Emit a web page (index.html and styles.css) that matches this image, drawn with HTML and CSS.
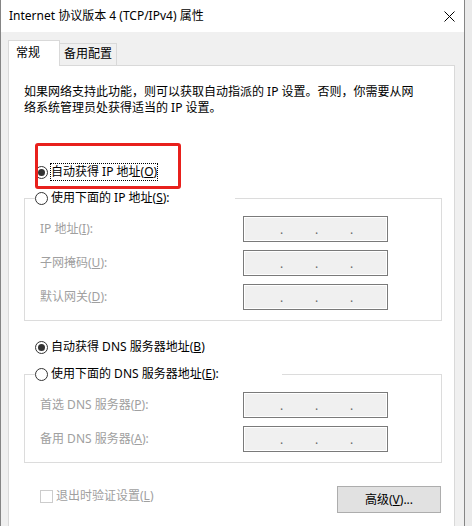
FILE: index.html
```html
<!DOCTYPE html>
<html lang="zh-CN">
<head>
<meta charset="utf-8">
<title>Internet 协议版本 4 (TCP/IPv4) 属性</title>
<link rel="stylesheet" href="styles.css">
</head>
<body>
<div class="window">
  <div class="titlebar">
    <span class="title">Internet 协议版本 4 (TCP/IPv4) 属性</span>
    <svg class="close" width="11" height="11" viewBox="0 0 11 11" aria-label="关闭"><path d="M0.5 0.5 L10.5 10.5 M10.5 0.5 L0.5 10.5" stroke="#000" stroke-width="1" fill="none"/></svg>
  </div>
  <div class="body">
    <div class="tabs">
      <div class="tab active">常规</div>
      <div class="tab">备用配置</div>
    </div>
    <div class="panel">
      <p class="desc">如果网络支持此功能，则可以获取自动指派的 IP 设置。否则，你需要从网<br>络系统管理员处获得适当的 IP 设置。</p>

      <label class="radio-row top-row"><span class="radio checked"></span><span class="rtext focus">自动获得 IP 地址(<u>O</u>)</span></label>

      <fieldset class="group group-ip">
        <legend class="legend-ip"><label class="radio-row"><span class="radio"></span><span class="rtext">使用下面的 IP 地址(<u>S</u>):</span></label></legend>
        <div class="field"><span class="flabel">IP 地址(<u>I</u>):</span><span class="ipbox"><span>.</span><span>.</span><span>.</span></span></div>
        <div class="field"><span class="flabel">子网掩码(<u>U</u>):</span><span class="ipbox"><span>.</span><span>.</span><span>.</span></span></div>
        <div class="field"><span class="flabel">默认网关(<u>D</u>):</span><span class="ipbox"><span>.</span><span>.</span><span>.</span></span></div>
      </fieldset>

      <label class="radio-row dns-row"><span class="radio checked"></span><span class="rtext">自动获得 DNS 服务器地址(<u>B</u>)</span></label>

      <fieldset class="group group-dns">
        <legend class="legend-dns"><label class="radio-row"><span class="radio"></span><span class="rtext">使用下面的 DNS 服务器地址(<u>E</u>):</span></label></legend>
        <div class="field"><span class="flabel">首选 DNS 服务器(<u>P</u>):</span><span class="ipbox"><span>.</span><span>.</span><span>.</span></span></div>
        <div class="field"><span class="flabel">备用 DNS 服务器(<u>A</u>):</span><span class="ipbox"><span>.</span><span>.</span><span>.</span></span></div>
      </fieldset>

      <div class="footer">
        <label class="check-row"><span class="checkbox"></span><span class="ctext">退出时验证设置(<u>L</u>)</span></label>
        <button class="btn">高级(<u>V</u>)...</button>
      </div>
    </div>
  </div>
  <div class="annot"></div>
</div>
</body>
</html>
```

FILE: styles.css
```css
* { box-sizing: border-box; }

html, body {
  margin: 0;
  padding: 0;
}

body {
  background: #eaeaea;
  font-family: "Noto Sans", "Noto Sans CJK SC", sans-serif;
  font-size: 12px;
  line-height: 16px;
  color: #000;
  width: 472px;
  height: 526px;
  overflow: hidden;
}

.window {
  position: relative;
  width: 465px;
  height: 526px;
  border-left: 1px solid #858585;
  border-right: 1px solid #858585;
  background: #f0f0f0;
}

.titlebar {
  height: 32px;
  background: #fff;
  display: flex;
  align-items: center;
  justify-content: space-between;
  padding: 0 9px 0 8px;
}

.title {
  font-size: 12px;
  line-height: 16px;
}

.close {
  display: block;
}

.body {
  padding: 8px 9px 0 7px;
}

.tabs {
  display: flex;
  align-items: flex-end;
  height: 25px;
}

.tab {
  border: 1px solid #d9d9d9;
  border-bottom: none;
  background: #f0f0f0;
  height: 22px;
  width: 58px;
  margin-left: -1px;
  text-align: center;
  padding-top: 2px;
}

.tab.active {
  position: relative;
  z-index: 1;
  background: #fff;
  height: 26px;
  width: 52px;
  margin-left: 0;
  margin-bottom: -1px;
  text-align: left;
  padding: 4px 0 0 7px;
}

.panel {
  background: #fff;
  border: 1px solid #d9d9d9;
  height: 470px;
  padding-top: 18px;
}

.desc {
  margin: 0 0 0 15px;
  line-height: 16px;
}

.radio-row {
  display: flex;
  align-items: center;
  height: 18px;
}

.top-row {
  margin: 47px 0 0 26px;
}

.dns-row {
  margin: 17px 0 0 26px;
}

.radio {
  width: 13px;
  height: 13px;
  border: 1px solid #333;
  border-radius: 50%;
  background: #fff;
  margin-right: 2px;
  display: flex;
  align-items: center;
  justify-content: center;
  flex: none;
}

.radio.checked::after {
  content: "";
  width: 7px;
  height: 7px;
  border-radius: 50%;
  background: #333;
}

.rtext {
  border: 1px solid transparent;
  padding: 0;
  line-height: 16px;
  white-space: nowrap;
}

.rtext.focus {
  border: 1px dotted #000;
}

.group {
  margin: 8px 12px 0 15px;
  width: 418px;
  border: 1px solid #dcdcdc;
  padding: 9px 0 10px 10px;
}

.group-dns {
  margin-top: 9px;
}

.group legend {
  padding: 0;
  height: 18px;
}

.legend-ip { width: 200px; }
.legend-dns { width: 247px; }

.field {
  display: flex;
  align-items: center;
  height: 26px;
  margin-top: 8px;
}

.field:first-of-type {
  margin-top: 0;
}

.flabel {
  width: 208px;
  padding-left: 5px;
  color: #a0a0a0;
  white-space: nowrap;
}

.ipbox {
  width: 145px;
  height: 26px;
  border: 1px solid #7a7a7a;
  box-shadow: inset 0 0 0 1px #fff;
  background: #f0f0f0;
  display: flex;
  align-items: center;
  gap: 32px;
  padding: 2px 0 0 36px;
  color: #6a6a6a;
  font-size: 12px;
}

.ipbox span {
  width: 3px;
  line-height: 12px;
}

.footer {
  display: flex;
  justify-content: space-between;
  align-items: flex-start;
  margin: 23px 13px 0 31px;
}

.check-row {
  display: flex;
  align-items: center;
  margin-top: 1px;
  color: #a0a0a0;
}

.checkbox {
  width: 13px;
  height: 13px;
  border: 1px solid #cccccc;
  background: #fff;
  margin-right: 3px;
}

.ctext {
  line-height: 18px;
}

.btn {
  width: 104px;
  height: 27px;
  background: #e1e1e1;
  border: 1px solid #adadad;
  font-family: "Noto Sans", "Noto Sans CJK SC", sans-serif;
  font-size: 12px;
  line-height: 16px;
  color: #000;
  padding: 0;
}

.annot {
  position: absolute;
  left: 34px;
  top: 143px;
  width: 146px;
  height: 46px;
  border: 3px solid #e8201c;
  border-radius: 3px;
}
```
